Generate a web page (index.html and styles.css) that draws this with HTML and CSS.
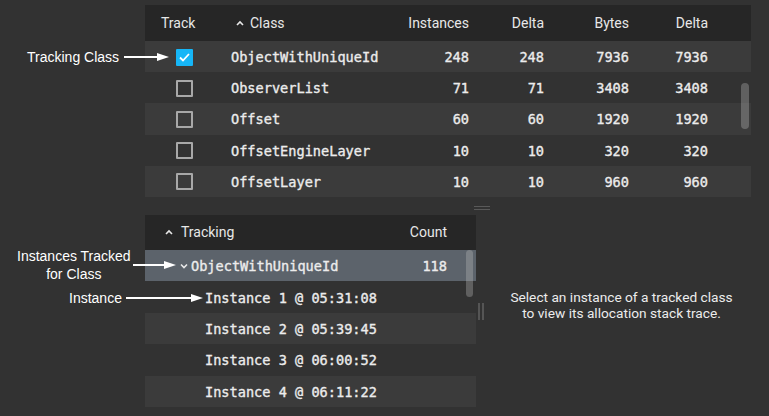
FILE: index.html
```html
<!DOCTYPE html>
<html>
<head>
<meta charset="utf-8">
<link rel="stylesheet" href="styles.css">
</head>
<body>
<div class="screen">
  <section class="classes">
    <div class="grid head">
      <div class="h-track">Track</div>
      <div class="h-class"><svg class="caret" width="8" height="6" viewBox="0 0 8 6"><polyline points="1,5 4,2 7,5"/></svg>Class</div>
      <div class="num">Instances</div>
      <div class="num">Delta</div>
      <div class="num">Bytes</div>
      <div class="num">Delta</div>
      <div></div>
    </div>
    <div class="grid row alt">
      <div><span class="cb on"><svg width="13" height="13" viewBox="0 0 13 13"><polyline points="2,6.5 5,9.5 11,3"/></svg></span></div>
      <div class="name">ObjectWithUniqueId</div>
      <div class="num">248</div><div class="num">248</div><div class="num">7936</div><div class="num">7936</div><div></div>
    </div>
    <div class="grid row">
      <div><span class="cb"></span></div>
      <div class="name">ObserverList</div>
      <div class="num">71</div><div class="num">71</div><div class="num">3408</div><div class="num">3408</div><div></div>
    </div>
    <div class="grid row alt">
      <div><span class="cb"></span></div>
      <div class="name">Offset</div>
      <div class="num">60</div><div class="num">60</div><div class="num">1920</div><div class="num">1920</div><div></div>
    </div>
    <div class="grid row">
      <div><span class="cb"></span></div>
      <div class="name">OffsetEngineLayer</div>
      <div class="num">10</div><div class="num">10</div><div class="num">320</div><div class="num">320</div><div></div>
    </div>
    <div class="grid row alt">
      <div><span class="cb"></span></div>
      <div class="name">OffsetLayer</div>
      <div class="num">10</div><div class="num">10</div><div class="num">960</div><div class="num">960</div><div></div>
    </div>
    <div class="thumb thumb-top"></div>
  </section>

  <div class="hsplit"><span class="grip-h"></span></div>

  <section class="lower">
    <div class="tracking">
      <div class="tgrid thead">
        <div class="t-name"><svg class="caret" width="8" height="6" viewBox="0 0 8 6"><polyline points="1,5 4,2 7,5"/></svg>Tracking</div>
        <div class="num">Count</div>
        <div></div>
      </div>
      <div class="tgrid trow selected">
        <div class="t-class"><svg class="chev" width="8" height="6" viewBox="0 0 8 6"><polyline points="1,1.5 4,4.5 7,1.5"/></svg>ObjectWithUniqueId</div>
        <div class="num">118</div>
        <div></div>
      </div>
      <div class="tgrid trow"><div class="t-inst">Instance 1 @ 05:31:08</div><div></div><div></div></div>
      <div class="tgrid trow alt"><div class="t-inst">Instance 2 @ 05:39:45</div><div></div><div></div></div>
      <div class="tgrid trow"><div class="t-inst">Instance 3 @ 06:00:52</div><div></div><div></div></div>
      <div class="tgrid trow alt"><div class="t-inst">Instance 4 @ 06:11:22</div><div></div><div></div></div>
      <div class="thumb thumb-bottom"></div>
    </div>
    <div class="vsplit"><span class="grip-v"></span></div>
    <div class="detail">
      <p>Select an instance of a tracked class<br>to view its allocation stack trace.</p>
    </div>
  </section>

  <div class="callout callout-class">
    <span>Tracking Class</span>
    <svg class="arrow" width="45" height="10" viewBox="0 0 45 10"><line x1="0" y1="5" x2="34" y2="5"/><polygon points="33,1 45,5 33,9"/></svg>
  </div>
  <div class="callout callout-tracked">
    <span class="two">Instances Tracked<br>for Class</span>
    <svg class="arrow" width="43" height="10" viewBox="0 0 43 10"><line x1="0" y1="5" x2="32" y2="5"/><polygon points="31,1 43,5 31,9"/></svg>
  </div>
  <div class="callout callout-instance">
    <span>Instance</span>
    <svg class="arrow" width="77" height="10" viewBox="0 0 77 10"><line x1="0" y1="5" x2="66" y2="5"/><polygon points="65,1 77,5 65,9"/></svg>
  </div>
</div>
</body>
</html>
```

FILE: styles.css
```css
html, body {
  margin: 0;
  padding: 0;
  background: #323232;
}

.screen {
  position: relative;
  width: 769px;
  height: 416px;
  box-sizing: border-box;
  padding: 5px 18px 0 145px;
  overflow: hidden;
  font-family: Roboto, "Liberation Sans", sans-serif;
  color: #e8e8e8;
}

/* ---------- top class table ---------- */
.classes {
  position: relative;
  width: 606px;
}

.grid {
  display: grid;
  grid-template-columns: 86px 158px 80px 75px 85px 79px 43px;
  align-items: center;
}

.head {
  height: 36px;
  background: #262626;
  font-size: 14px;
}

.h-track {
  padding-left: 16px;
}

.h-class {
  display: flex;
  align-items: center;
  padding-left: 5px;
}

.caret {
  margin-right: 6px;
}

.caret polyline,
.chev polyline {
  fill: none;
  stroke: #e8e8e8;
  stroke-width: 1.6;
}

.num {
  text-align: right;
}

.row {
  height: 31.2px;
  padding-top: 1px;
  box-sizing: border-box;
  font-family: "DejaVu Sans Mono", "Liberation Mono", monospace;
  font-size: 13.6px;
  color: #ececec;
  -webkit-text-stroke: 0.35px #ececec;
}

.alt {
  background: #3b3b3b;
}

.cb {
  display: flex;
  align-items: center;
  justify-content: center;
  margin-left: 31px;
  width: 17px;
  height: 17px;
  box-sizing: border-box;
  border: 2px solid #a8a8a8;
  border-radius: 1px;
}

.cb.on {
  background: #16b6f7;
  border-color: #16b6f7;
}

.cb.on polyline {
  fill: none;
  stroke: #ffffff;
  stroke-width: 1.8;
}

.thumb {
  position: absolute;
  width: 8px;
  border-radius: 4px;
  background: rgba(190, 190, 190, 0.33);
}

.thumb-top {
  right: 2px;
  top: 78px;
  height: 46px;
}

/* ---------- horizontal splitter ---------- */
.hsplit {
  height: 18px;
  display: flex;
  padding-left: 329px;
}

.grip-h {
  margin-top: 9px;
  width: 16px;
  height: 2px;
  border-top: 1px solid #595959;
  border-bottom: 1px solid #595959;
}

/* ---------- lower area ---------- */
.lower {
  display: flex;
  height: 201px;
}

.tracking {
  position: relative;
  width: 331px;
  flex: none;
}

.tgrid {
  display: grid;
  grid-template-columns: 1fr 60px 29px;
  align-items: center;
}

.thead {
  height: 35px;
  background: #262626;
  font-size: 14px;
}

.t-name {
  display: flex;
  align-items: center;
  padding-left: 20px;
}

.t-name .caret {
  margin-right: 8px;
}

.trow {
  height: 31.4px;
  padding-top: 1px;
  box-sizing: border-box;
  font-family: "DejaVu Sans Mono", "Liberation Mono", monospace;
  font-size: 13.6px;
  color: #ececec;
  -webkit-text-stroke: 0.35px #ececec;
}

.trow.selected {
  background: #5c636b;
}

.t-class {
  display: flex;
  align-items: center;
  padding-left: 35px;
}

.chev {
  margin-right: 3px;
}

.t-inst {
  padding-left: 60px;
  white-space: nowrap;
}

.thumb-bottom {
  right: 3px;
  top: 35px;
  width: 7px;
  height: 47px;
}

.vsplit {
  width: 8px;
  flex: none;
}

.grip-v {
  display: block;
  margin: 88px 0 0 2px;
  width: 2px;
  height: 17px;
  border-left: 2px solid #555555;
  border-right: 2px solid #555555;
}

.detail {
  flex: 1;
  padding-left: 8px;
  padding-top: 74px;
  display: flex;
  justify-content: center;
}

.detail p {
  margin: 0;
  text-align: center;
  font-size: 13.7px;
  line-height: 16px;
  color: #ececec;
}

/* ---------- annotations (callouts over the content) ---------- */
.callout {
  position: absolute;
  display: flex;
  align-items: center;
  font-family: "Liberation Sans", Arial, sans-serif;
  font-size: 14px;
  color: #ffffff;
  white-space: nowrap;
}

.arrow line {
  stroke: #ffffff;
  stroke-width: 2;
}

.arrow polygon {
  fill: #ffffff;
}

.callout-class {
  left: 27px;
  top: 48px;
  height: 18px;
  gap: 5px;
}

.callout-tracked {
  left: 17px;
  top: 247px;
  gap: 2px;
}

.callout-tracked .two {
  text-align: center;
  line-height: 18px;
}

.callout-instance {
  left: 69px;
  top: 289px;
  height: 18px;
  gap: 4px;
}
```
